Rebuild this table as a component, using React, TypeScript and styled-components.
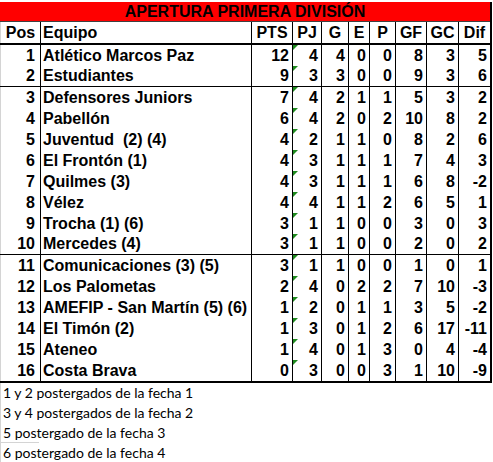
import React from "react";
import styled, { createGlobalStyle } from "styled-components";

const GlobalStyle = createGlobalStyle`
  html, body { margin: 0; padding: 0; background: #ffffff; }
  body { font-family: "Liberation Sans", Arial, sans-serif; color: #000; }
`;

const COLS = "40px 211px 41px 29px 27px 21px 26px 31px 32px 32px";

const Page = styled.div`
  padding-top: 2px;
  width: 493px;
`;

const Sheet = styled.div`
  width: 492px;
  box-sizing: border-box;
  border-right: 2px solid #000;
`;

const Title = styled.div`
  height: 19px;
  background: #ff0000;
  border-bottom: 1px solid #404040;
  display: flex;
  align-items: center;
  justify-content: center;
  font-weight: bold;
  font-size: 16px;
  line-height: 19px;
`;

const Row = styled.div<{ $border?: "thin" | "thick" | "none" }>`
  display: grid;
  grid-template-columns: ${COLS};
  height: ${(p) => (p.$border === "thick" ? "23px" : "21px")};
  box-sizing: border-box;
  border-bottom: ${(p) =>
    p.$border === "thick" ? "2px solid #000" : p.$border === "thin" ? "1px solid #000" : "none"};
  font-weight: bold;
  font-size: 16px;
`;

const Cell = styled.div<{ $align?: "left" | "right" | "center"; $first?: boolean }>`
  position: relative;
  box-sizing: border-box;
  border-left: 1px solid ${(p) => (p.$first ? "#d4d4d4" : "#000")};
  display: flex;
  align-items: center;
  justify-content: ${(p) =>
    p.$align === "left" ? "flex-start" : p.$align === "center" ? "center" : "flex-end"};
  padding: ${(p) => (p.$align === "left" ? "0 0 0 2px" : p.$align === "center" ? "0" : "0 3px 0 0")};
  white-space: pre;
  overflow: visible;
  line-height: 1;
`;

const PosCell = styled(Cell)`
  padding-right: ${(p) => (p.$align === "right" ? "5px" : "0")};
`;

const FlagCell = styled(Cell)`
  &::before {
    content: "";
    position: absolute;
    top: 0;
    left: 0;
    width: 0;
    height: 0;
    border-top: 5px solid #1e8a1e;
    border-right: 5px solid transparent;
  }
`;

const Footer = styled.div`
  font-family: Lato, "Open Sans", sans-serif;
  font-size: 14px;
  border-left: 1px solid #d4d4d4;
`;

const Note = styled.div<{ $grid?: boolean }>`
  height: 20px;
  line-height: 20px;
  padding-left: 2px;
  position: relative;
  white-space: nowrap;
  ${(p) =>
    p.$grid
      ? `&::after { content: ""; position: absolute; left: 0; bottom: 0; width: 38px; height: 1px; background: #d4d4d4; }`
      : ""}
`;

type Team = [number, string, number, number, number, number, number, number, number, number];

const teams: Team[] = [
  [1, "Atlético Marcos Paz", 12, 4, 4, 0, 0, 8, 3, 5],
  [2, "Estudiantes", 9, 3, 3, 0, 0, 9, 3, 6],
  [3, "Defensores Juniors", 7, 4, 2, 1, 1, 5, 3, 2],
  [4, "Pabellón", 6, 4, 2, 0, 2, 10, 8, 2],
  [5, "Juventud  (2) (4)", 4, 2, 1, 1, 0, 8, 2, 6],
  [6, "El Frontón (1)", 4, 3, 1, 1, 1, 7, 4, 3],
  [7, "Quilmes (3)", 4, 3, 1, 1, 1, 6, 8, -2],
  [8, "Vélez", 4, 4, 1, 1, 2, 6, 5, 1],
  [9, "Trocha (1) (6)", 3, 1, 1, 0, 0, 3, 0, 3],
  [10, "Mercedes (4)", 3, 1, 1, 0, 0, 2, 0, 2],
  [11, "Comunicaciones (3) (5)", 3, 1, 1, 0, 0, 1, 0, 1],
  [12, "Los Palometas", 2, 4, 0, 2, 2, 7, 10, -3],
  [13, "AMEFIP - San Martín (5) (6)", 1, 2, 0, 1, 1, 3, 5, -2],
  [14, "El Timón (2)", 1, 3, 0, 1, 2, 6, 17, -11],
  [15, "Ateneo", 1, 4, 0, 1, 3, 0, 4, -4],
  [16, "Costa Brava", 0, 3, 0, 0, 3, 1, 10, -9],
];

const headers = ["PTS", "PJ", "G", "E", "P", "GF", "GC", "Dif"];

const notes = [
  "1 y 2 postergados de la fecha 1",
  "3 y 4 postergados de la fecha 2",
  "5 postergado de la fecha 3",
  "6 postergado de la fecha 4",
];

function borderFor(pos: number): "thin" | "thick" | "none" {
  if (pos === 2 || pos === 10) return "thin";
  if (pos === 16) return "thick";
  return "none";
}

export default function App() {
  return (
    <>
      <GlobalStyle />
      <Page>
        <Sheet>
          <Title>APERTURA PRIMERA DIVISIÓN</Title>
          <Row $border="thick">
            <Cell $first $align="center">Pos</Cell>
            <Cell $align="left">Equipo</Cell>
            {headers.map((h) => (
              <Cell key={h} $align="center">{h}</Cell>
            ))}
          </Row>
          {teams.map((t) => (
            <Row key={t[0]} $border={borderFor(t[0])}>
              <PosCell $first $align="right">{t[0]}</PosCell>
              <Cell $align="left">{t[1]}</Cell>
              <Cell>{t[2]}</Cell>
              <FlagCell>{t[3]}</FlagCell>
              <Cell>{t[4]}</Cell>
              <Cell>{t[5]}</Cell>
              <Cell>{t[6]}</Cell>
              <Cell>{t[7]}</Cell>
              <Cell>{t[8]}</Cell>
              <Cell>{t[9]}</Cell>
            </Row>
          ))}
        </Sheet>
        <Footer>
          {notes.map((n, i) => (
            <Note key={n} $grid={i === 2}>{n}</Note>
          ))}
        </Footer>
      </Page>
    </>
  );
}
